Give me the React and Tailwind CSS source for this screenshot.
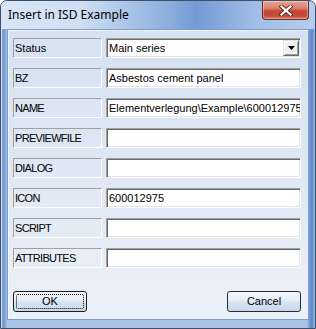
import React from 'react'

const rows = [
  { label: 'Status', value: 'Main series', combo: true },
  { label: 'BZ', value: 'Asbestos cement panel' },
  { label: 'NAME', value: 'Elementverlegung\\Example\\600012975' },
  { label: 'PREVIEWFILE', value: '' },
  { label: 'DIALOG', value: '' },
  { label: 'ICON', value: '600012975' },
  { label: 'SCRIPT', value: '' },
  { label: 'ATTRIBUTES', value: '' },
]

function CloseButton() {
  return (
    <div className="mr-[6px] flex h-[19px] w-[47px] items-center justify-center rounded-b-[4px] border border-t-0 border-[#6d2b22] bg-[linear-gradient(180deg,#e8a595_0%,#d98170_40%,#c54a36_55%,#c24a34_80%,#d7755d_100%)] shadow-[inset_0_0_0_1px_rgba(255,255,255,0.35)]">
      <svg width="14" height="11" viewBox="0 0 14 11">
        <path d="M2.5 1.5 L11.5 9.5 M11.5 1.5 L2.5 9.5" stroke="#5a2a25" strokeWidth="4" strokeLinecap="square" fill="none" />
        <path d="M2.5 1.5 L11.5 9.5 M11.5 1.5 L2.5 9.5" stroke="#ffffff" strokeWidth="2.2" strokeLinecap="square" fill="none" />
      </svg>
    </div>
  )
}

function Field({ row }) {
  return (
    <div className="relative flex h-[20px] w-[195px] items-center border border-t-[#a0a0a0] border-l-[#a0a0a0] border-b-white border-r-white bg-white shadow-[inset_1px_1px_0_#696969,inset_-1px_-1px_0_#e3e3e3]">
      <span className="whitespace-nowrap overflow-hidden pl-[2px] pt-[1px] text-[11px] leading-none text-black">
        {row.value}
      </span>
      {row.combo && (
        <div className="absolute right-[1px] top-[1px] flex h-[16px] w-[16px] items-center justify-center border border-t-[#e3e3e3] border-l-[#e3e3e3] border-b-[#696969] border-r-[#696969] bg-[#f0f0f0] shadow-[inset_1px_1px_0_#ffffff,inset_-1px_-1px_0_#a0a0a0]">
          <svg width="7" height="4" viewBox="0 0 7 4">
            <path d="M0 0 H7 L3.5 4 Z" fill="#000" />
          </svg>
        </div>
      )}
    </div>
  )
}

export default function App() {
  return (
    <div
      className="relative flex h-[329px] w-[316px] flex-col overflow-hidden rounded-t-[7px] border border-[#3f4f66] bg-[linear-gradient(90deg,#9fbde6_0px,#6f98d3_2px,#7ea3d8_4px,#a9c4e8_6px,#a9c4e8_calc(100%-8px),#6d96d2_calc(100%-5px),#5a86c9_calc(100%-3px),#9ab8e2_100%)] shadow-[inset_1px_1px_0_rgba(255,255,255,0.6)]"
      style={{ fontFamily: '"Liberation Sans", Arial, sans-serif' }}
    >
      {/* Title bar */}
      <div className="flex h-[28px] items-start bg-[linear-gradient(90deg,#d7e5f6_0%,#cfdff4_25%,#8fb1df_52%,#739bd5_62%,#a3bfe6_82%,#b7cdec_100%)]">
        <div
          className="pl-[7px] pt-[6px] text-[12px] leading-[16px] text-black"
          style={{ fontFamily: '"Noto Sans", "Open Sans", sans-serif' }}
        >
          Insert in ISD Example
        </div>
        <div className="ml-auto">
          <CloseButton />
        </div>
      </div>

      {/* Client area */}
      <div className="mx-[6px] flex h-[291px] flex-col border border-[#7f9cc4] bg-[linear-gradient(180deg,#d6e2f2_0%,#dfe8f4_50%,#ebf1f9_100%)] pl-[5px] pt-[8px] shadow-[inset_1px_1px_0_rgba(255,255,255,0.6)]">
        <div className="flex flex-col gap-[10px]">
          {rows.map((row) => (
            <div key={row.label} className="flex h-[20px] gap-[4px]">
              <div className="flex h-[20px] w-[89px] items-center border border-t-[#a0a0a0] border-l-[#a0a0a0] border-b-white border-r-white">
                <span
                  className={
                    row.label === row.label.toUpperCase()
                      ? 'pl-[1px] pt-[1px] text-[11px] leading-none tracking-[-0.7px] text-black'
                      : 'pl-[1px] pt-[1px] text-[11px] leading-none text-black'
                  }
                >
                  {row.label}
                </span>
              </div>
              <Field row={row} />
            </div>
          ))}
        </div>

        {/* Buttons */}
        <div className="mt-[23px] flex w-[288px] justify-between">
          <button className="relative h-[21px] w-[74px] rounded-[3px] border border-[#1c1c1c] bg-[linear-gradient(180deg,#f4f7fc_0%,#e6edf7_45%,#d5e2f1_55%,#c8d8ec_100%)] text-[11px] leading-none text-black">
            <span className="pointer-events-none absolute inset-[2px] rounded-[2px] border border-dotted border-black" />
            OK
          </button>
          <button className="h-[21px] w-[74px] rounded-[3px] border border-[#2b2b2b] bg-[linear-gradient(180deg,#f4f7fc_0%,#e6edf7_45%,#d5e2f1_55%,#c8d8ec_100%)] text-[11px] leading-none text-black">
            Cancel
          </button>
        </div>
      </div>
    </div>
  )
}
